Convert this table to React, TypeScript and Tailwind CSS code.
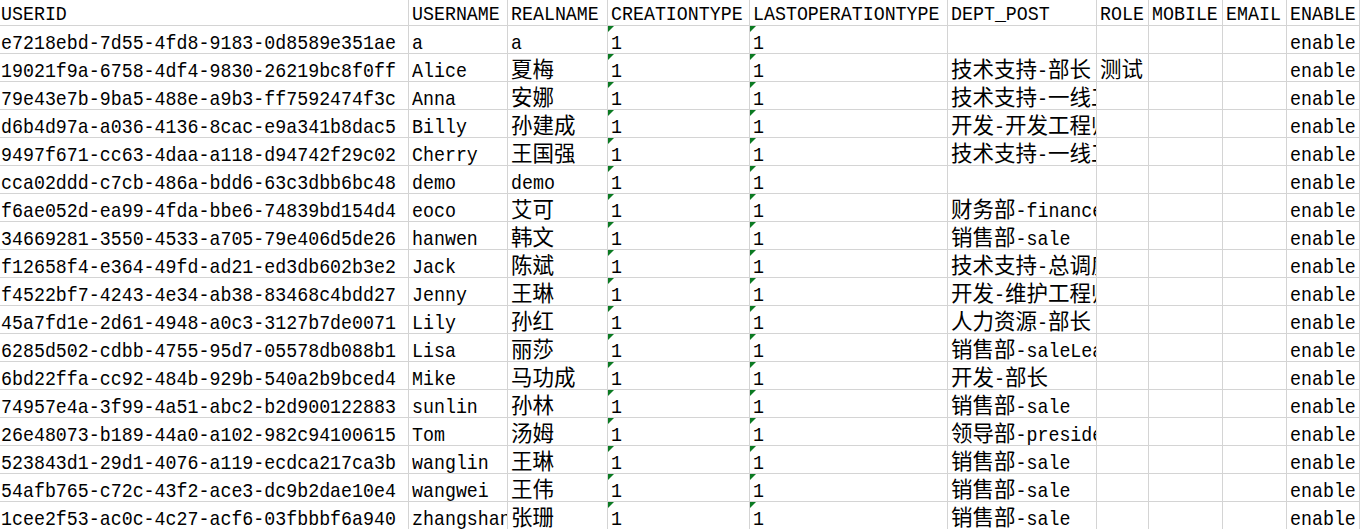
const headers = [
  "USERID",
  "USERNAME",
  "REALNAME",
  "CREATIONTYPE",
  "LASTOPERATIONTYPE",
  "DEPT_POST",
  "ROLE",
  "MOBILE",
  "EMAIL",
  "ENABLE",
];

const users = [
  ["e7218ebd-7d55-4fd8-9183-0d8589e351ae", "a", "a", ""],
  ["19021f9a-6758-4df4-9830-26219bc8f0ff", "Alice", "夏梅", "技术支持-部长", "测试"],
  ["79e43e7b-9ba5-488e-a9b3-ff7592474f3c", "Anna", "安娜", "技术支持-一线工程师"],
  ["d6b4d97a-a036-4136-8cac-e9a341b8dac5", "Billy", "孙建成", "开发-开发工程师"],
  ["9497f671-cc63-4daa-a118-d94742f29c02", "Cherry", "王国强", "技术支持-一线工程师"],
  ["cca02ddd-c7cb-486a-bdd6-63c3dbb6bc48", "demo", "demo", ""],
  ["f6ae052d-ea99-4fda-bbe6-74839bd154d4", "eoco", "艾可", "财务部-finance"],
  ["34669281-3550-4533-a705-79e406d5de26", "hanwen", "韩文", "销售部-sale"],
  ["f12658f4-e364-49fd-ad21-ed3db602b3e2", "Jack", "陈斌", "技术支持-总调度"],
  ["f4522bf7-4243-4e34-ab38-83468c4bdd27", "Jenny", "王琳", "开发-维护工程师"],
  ["45a7fd1e-2d61-4948-a0c3-3127b7de0071", "Lily", "孙红", "人力资源-部长"],
  ["6285d502-cdbb-4755-95d7-05578db088b1", "Lisa", "丽莎", "销售部-saleLeader"],
  ["6bd22ffa-cc92-484b-929b-540a2b9bced4", "Mike", "马功成", "开发-部长"],
  ["74957e4a-3f99-4a51-abc2-b2d900122883", "sunlin", "孙林", "销售部-sale"],
  ["26e48073-b189-44a0-a102-982c94100615", "Tom", "汤姆", "领导部-president"],
  ["523843d1-29d1-4076-a119-ecdca217ca3b", "wanglin", "王琳", "销售部-sale"],
  ["54afb765-c72c-43f2-ace3-dc9b2dae10e4", "wangwei", "王伟", "销售部-sale"],
  ["1cee2f53-ac0c-4c27-acf6-03fbbbf6a940", "zhangshan", "张珊", "销售部-sale"],
];

// latin in a mono face (stretched a little, SimSun is taller), hanzi sized to two columns
function CellText({ text }: { text: string }) {
  const parts = text.split(/([\u3400-\u9fff]+)/);
  return (
    <>
      {parts.map((part, i) =>
        /[\u3400-\u9fff]/.test(part) ? (
          <span key={i} className="font-['Noto_Sans_CJK_SC',sans-serif] text-[21.5px]">
            {part}
          </span>
        ) : part ? (
          <span key={i} className="inline-block origin-bottom scale-y-[1.15]">
            {part}
          </span>
        ) : null
      )}
    </>
  );
}

function Cell({
  text,
  marker,
  header,
  first,
}: {
  text: string;
  marker?: boolean;
  header?: boolean;
  first?: boolean;
}) {
  return (
    <div
      className={`relative flex items-end overflow-hidden whitespace-nowrap border-r border-b border-[#d4d4d4] ${
        header ? "h-[26px] pb-[2px]" : "h-[28px] pb-[1px]"
      } ${first ? "pl-[1px]" : "pl-[3px]"}`}
    >
      {marker && (
        <span className="absolute left-0 top-0 h-0 w-0 border-t-[6px] border-r-[6px] border-t-[#0b7a22] border-r-transparent" />
      )}
      <span className="leading-[16px]">
        <CellText text={text} />
      </span>
    </div>
  );
}

export default function App() {
  return (
    <div className="h-[529px] w-[1360px] overflow-hidden bg-white font-['Liberation_Mono','Noto_Sans_CJK_SC',monospace] text-[18.3px] text-black">
      <div className="grid grid-cols-[409px_99px_100px_142px_198px_149px_52px_74px_64px_1fr]">
        {headers.map((h, i) => (
          <Cell key={h} text={h} header first={i === 0} />
        ))}
        {users.map((u) => {
          const cells = [u[0], u[1], u[2], "1", "1", u[3] ?? "", u[4] ?? "", "", "", "enable"];
          return cells.map((c, i) => (
            <Cell key={u[0] + i} text={c} first={i === 0} marker={i === 3 || i === 4} />
          ));
        })}
      </div>
    </div>
  );
}
